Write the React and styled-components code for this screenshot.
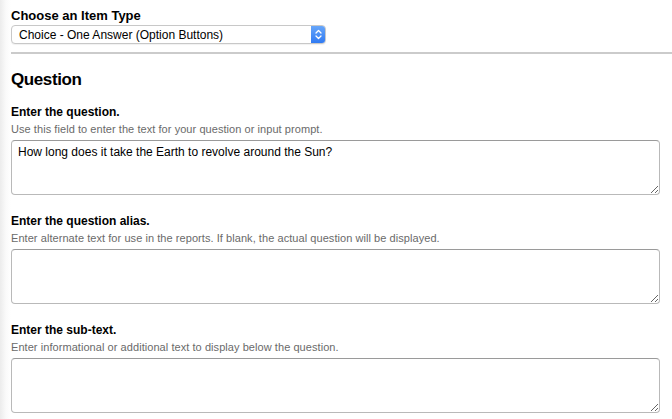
import React from "react";
import styled, { createGlobalStyle } from "styled-components";

const GlobalStyle = createGlobalStyle`
  html, body {
    margin: 0;
    padding: 0;
  }
  body {
    background: linear-gradient(to right, #ececec 0px, #fafafa 6px, #ffffff 11px);
    font-family: "Liberation Sans", Arial, sans-serif;
    color: #000;
  }
`;

const FIELDS = [
  {
    id: "question",
    label: "Enter the question.",
    hint: "Use this field to enter the text for your question or input prompt.",
    value: "How long does it take the Earth to revolve around the Sun?",
  },
  {
    id: "alias",
    label: "Enter the question alias.",
    hint: "Enter alternate text for use in the reports. If blank, the actual question will be displayed.",
    value: "",
  },
  {
    id: "subtext",
    label: "Enter the sub-text.",
    hint: "Enter informational or additional text to display below the question.",
    value: "",
  },
];

const Chevrons = () => (
  <svg width="7" height="11" viewBox="0 0 7 11" fill="none">
    <path d="M1 4L3.5 1.5L6 4" stroke="#fff" strokeWidth="1.3" strokeLinecap="round" strokeLinejoin="round" />
    <path d="M1 7L3.5 9.5L6 7" stroke="#fff" strokeWidth="1.3" strokeLinecap="round" strokeLinejoin="round" />
  </svg>
);

const Field = ({ id, label, hint, value }) => (
  <StyledField>
    <StyledLabel htmlFor={id}>{label}</StyledLabel>
    <StyledHint>{hint}</StyledHint>
    <StyledTextarea id={id} defaultValue={value} />
  </StyledField>
);

const App = () => (
  <>
    <GlobalStyle />
    <StyledPage>
      <StyledTypeLabel htmlFor="itemType">Choose an Item Type</StyledTypeLabel>
      <StyledSelectWrapper>
        <StyledSelect id="itemType" defaultValue="choice-one">
          <option value="choice-one">Choice - One Answer (Option Buttons)</option>
        </StyledSelect>
        <StyledStepper>
          <Chevrons />
        </StyledStepper>
      </StyledSelectWrapper>
      <StyledRule />
      <StyledHeading>Question</StyledHeading>
      {FIELDS.map((field) => (
        <Field key={field.id} {...field} />
      ))}
    </StyledPage>
  </>
);

App.displayName = "App";

export default App;

const StyledPage = styled.div`
  display: flex;
  flex-direction: column;
  padding: 8px 0 0 11px;
`;

const StyledTypeLabel = styled.label`
  font-size: 13px;
  font-weight: bold;
  line-height: 15px;
`;

const StyledSelectWrapper = styled.div`
  display: flex;
  align-items: stretch;
  width: 315px;
  height: 19px;
  margin-top: 2px;
  box-sizing: border-box;
  border: 1px solid #c8c8c8;
  border-radius: 4px;
  background: #fff;
  box-shadow: 0 1px 1px rgba(0, 0, 0, 0.06);
  overflow: hidden;
`;

const StyledSelect = styled.select`
  flex: 1;
  appearance: none;
  border: none;
  outline: none;
  background: transparent;
  padding: 0 0 0 7px;
  margin: 0;
  font-family: "Liberation Sans", Arial, sans-serif;
  font-size: 12px;
  color: #000;
`;

const StyledStepper = styled.span`
  display: flex;
  align-items: center;
  justify-content: center;
  width: 15px;
  margin: -1px -1px -1px 0;
  background: linear-gradient(to bottom, #6aa8fa, #2d78f2);
  border-radius: 0 4px 4px 0;
`;

const StyledRule = styled.hr`
  align-self: stretch;
  height: 0;
  margin: 8px 0 0;
  border: none;
  border-top: 2px solid #cbcbcb;
`;

const StyledHeading = styled.h2`
  font-size: 17px;
  font-weight: bold;
  letter-spacing: -0.4px;
  line-height: 22px;
  margin: 15px 0 14px;
`;

const StyledField = styled.div`
  display: flex;
  flex-direction: column;
  margin-right: 12px;
  margin-bottom: 19px;
`;

const StyledLabel = styled.label`
  font-size: 12px;
  font-weight: bold;
  line-height: 15px;
`;

const StyledHint = styled.p`
  margin: 2px 0 0;
  font-size: 11px;
  letter-spacing: 0.06px;
  line-height: 14px;
  color: #6a6a6a;
`;

const StyledTextarea = styled.textarea`
  display: block;
  box-sizing: border-box;
  width: 100%;
  height: 55px;
  margin: 4px 0 0;
  padding: 4px 6px;
  border: 1px solid #b9b9b9;
  border-top-color: #9a9a9a;
  border-radius: 4px;
  font-family: "Liberation Sans", Arial, sans-serif;
  font-size: 12px;
  line-height: 15px;
  color: #000;
  background: #fff;
  resize: vertical;
  outline: none;
`;
